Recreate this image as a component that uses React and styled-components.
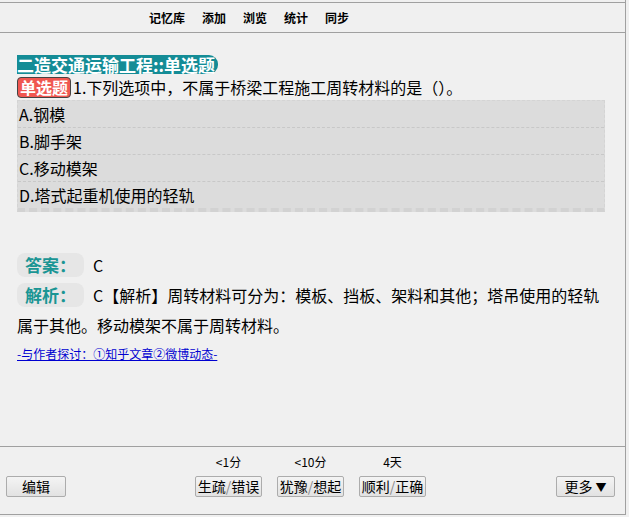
import React from 'react';
import styled, { createGlobalStyle } from 'styled-components';

const GlobalStyle = createGlobalStyle`
  html, body {
    margin: 0;
    padding: 0;
    background: #f0f0f0;
  }
  body {
    font-family: "Noto Sans CJK SC", "Noto Sans", sans-serif;
    color: #000;
  }
`;

const Window = styled.div`
  width: 626px;
  height: 515px;
  border-right: 1px solid #a0a0a0;
  display: flex;
  flex-direction: column;
  box-sizing: border-box;
`;

const Nav = styled.nav`
  margin-top: 2px;
  height: 29px;
  border-top: 1px solid #a0a0a0;
  border-bottom: 1px solid #a0a0a0;
  display: flex;
  align-items: center;
  gap: 17px;
  padding-left: 149px;
`;

const NavItem = styled.span`
  font-size: 12px;
  font-weight: bold;
  line-height: 14px;
  cursor: pointer;
`;

const Content = styled.main`
  flex: 1;
  padding: 22px 20px 0 17px;
`;

const DeckTitle = styled.div`
  width: fit-content;
  background: #148c96;
  color: #fff;
  font-size: 17px;
  font-weight: bold;
  line-height: 19px;
  padding-right: 3px;
  border-radius: 0 9px 9px 0;
`;

const Question = styled.div`
  margin-top: 3px;
  display: flex;
  align-items: center;
  font-size: 16px;
  line-height: 21px;
`;

const Badge = styled.span`
  display: inline-block;
  background: #f05650;
  color: #fff;
  font-weight: bold;
  font-size: 16px;
  line-height: 17px;
  padding: 1px 2px;
  border: 1px solid #444;
  border-radius: 4px;
  margin-right: 2px;
`;

const Options = styled.div`
  margin-top: 2px;
  background: #dcdcdc;
  border: 1px dashed #d4d4d4;
  border-bottom: 4px dashed #d2d2d2;
`;

const Option = styled.div`
  height: 26px;
  line-height: 26px;
  font-size: 16px;
  padding-left: 1px;
  border-bottom: 1px dashed #c8c8c8;
  &:last-child {
    border-bottom: none;
  }
`;

const Answer = styled.div`
  margin-top: 38px;
  font-size: 16px;
  line-height: 30px;
`;

const Label = styled.span`
  display: inline-block;
  line-height: 24px;
  padding: 0 8px;
  margin-right: 9px;
  background: #e6e6e6;
  border-radius: 8px;
  color: #1a9594;
  font-weight: bold;
  font-size: 17px;
  vertical-align: top;
  margin-top: 3px;
`;

const Discuss = styled.a`
  display: inline-block;
  margin-top: 6px;
  font-size: 12px;
  line-height: 16px;
  color: #0000d0;
  text-decoration: underline;
  cursor: pointer;
`;

const Footer = styled.footer`
  box-sizing: border-box;
  height: 69px;
  border-top: 1px solid #a0a0a0;
  border-bottom: 1px solid #a0a0a0;
  display: grid;
  grid-template-columns: 1fr auto 1fr;
  align-items: end;
  padding: 0 10px 17px 6px;
`;

const Side = styled.div`
  display: flex;
  justify-content: ${(p) => (p.right ? 'flex-end' : 'flex-start')};
`;

const Grades = styled.div`
  display: flex;
  gap: 15px;
`;

const Grade = styled.div`
  display: flex;
  flex-direction: column;
  align-items: center;
  gap: 7px;
`;

const Interval = styled.span`
  font-size: 12px;
  line-height: 14px;
`;

const Button = styled.button`
  height: 21px;
  width: ${(p) => p.width || '67px'};
  padding: 0;
  font-family: "Noto Sans CJK SC", sans-serif;
  font-size: 14px;
  line-height: 19px;
  color: #000;
  background: linear-gradient(#f4f4f4, #e2e2e2);
  border: 1px solid #acacac;
  border-radius: 2px;
  cursor: pointer;
`;

const Slash = styled.span`
  color: #8a8a8a;
`;

const Arrow = styled.span`
  font-size: 11px;
  margin-left: 3px;
`;

const navItems = ['记忆库', '添加', '浏览', '统计', '同步'];

const options = ['A.钢模', 'B.脚手架', 'C.移动模架', 'D.塔式起重机使用的轻轨'];

const grades = [
  { interval: '<1分', a: '生疏', b: '错误' },
  { interval: '<10分', a: '犹豫', b: '想起' },
  { interval: '4天', a: '顺利', b: '正确' },
];

export default function App() {
  return (
    <>
      <GlobalStyle />
      <Window>
        <Nav>
          {navItems.map((item) => (
            <NavItem key={item}>{item}</NavItem>
          ))}
        </Nav>

        <Content>
          <DeckTitle>二造交通运输工程::单选题</DeckTitle>
          <Question>
            <Badge>单选题</Badge>
            1.下列选项中，不属于桥梁工程施工周转材料的是（）。
          </Question>
          <Options>
            {options.map((o) => (
              <Option key={o}>{o}</Option>
            ))}
          </Options>

          <Answer>
            <div>
              <Label>答案：</Label>C
            </div>
            <div>
              <Label>解析：</Label>
              C【解析】周转材料可分为：模板、挡板、架料和其他；塔吊使用的轻轨属于其他。移动模架不属于周转材料。
            </div>
          </Answer>
          <Discuss>-与作者探讨：①知乎文章②微博动态-</Discuss>
        </Content>

        <Footer>
          <Side>
            <Button width="60px">编辑</Button>
          </Side>
          <Grades>
            {grades.map((g) => (
              <Grade key={g.a}>
                <Interval>{g.interval}</Interval>
                <Button>
                  {g.a}
                  <Slash>/</Slash>
                  {g.b}
                </Button>
              </Grade>
            ))}
          </Grades>
          <Side right>
            <Button width="59px">
              更多<Arrow>▼</Arrow>
            </Button>
          </Side>
        </Footer>
      </Window>
    </>
  );
}
